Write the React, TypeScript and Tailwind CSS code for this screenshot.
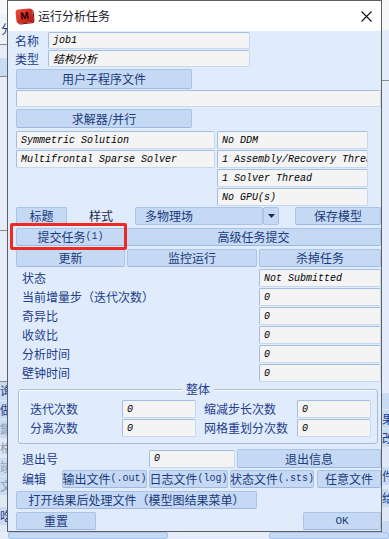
import type { ReactNode } from "react";

const cjk = "font-['Noto_Sans_CJK_SC',sans-serif]";
const monoItalic = "font-['Liberation_Mono',monospace] italic text-[10px]";

function M({ children }: { children: ReactNode }) {
  return <span className="font-['Liberation_Mono',monospace] text-[10px]">{children}</span>;
}

function Btn({
  w,
  h = "h-[18px]",
  className = "",
  children,
}: {
  w: string;
  h?: string;
  className?: string;
  children?: ReactNode;
}) {
  return (
    <button
      type="button"
      className={`flex ${w} ${h} shrink-0 items-center justify-center whitespace-nowrap rounded-[2px] border border-[#aac4e7] border-b-[#9db9df] bg-[#c5d9f4] text-[12px] leading-none text-[#1b3a7a] ${className}`}
    >
      {children}
    </button>
  );
}

function Field({
  w,
  h = "h-[18px]",
  className = "",
  children,
}: {
  w: string;
  h?: string;
  className?: string;
  children?: ReactNode;
}) {
  return (
    <div
      className={`flex ${w} ${h} shrink-0 items-center overflow-hidden whitespace-nowrap rounded-[2px] border border-[#c6d7ee] border-l-[#a3bee3] border-t-[#a3bee3] bg-[#f4f4f4] pl-[4px] text-black ${monoItalic} ${className}`}
    >
      {children}
    </div>
  );
}

function Label({ className = "", children }: { className?: string; children: ReactNode }) {
  return <span className={`shrink-0 text-[12px] leading-none text-[#1f3d8c] ${className}`}>{children}</span>;
}

function StatusRow({ label, value, first }: { label: string; value: string; first?: boolean }) {
  return (
    <div className={`flex h-[18px] items-center ${first ? "mt-[2px]" : "mt-[1px]"}`}>
      <Label className="ml-[14px]">{label}</Label>
      <Field w="w-[122px]" className="ml-auto">
        {value}
      </Field>
    </div>
  );
}

function Background() {
  return (
    <div className="absolute inset-0 flex justify-between">
      <div className="flex w-[7px] flex-col overflow-hidden text-[12px] text-[#1f3d8c]">
        <div className="h-[14px] bg-[#f7f7f7]" />
        <div className="flex h-[30px] items-center bg-[#eef2f8] pl-[1px]">分</div>
        <div className="h-px bg-[#8c8c8c]" />
        <div className="h-[13px] bg-[#e4edf9]" />
        <div className="h-[18px] bg-[#c8dbf3]" />
        <div className="h-px bg-[#8c8c8c]" />
        <div className="h-[153px] bg-[#e4edf9]" />
        <div className="h-px bg-[#8c8c8c]" />
        <div className="h-[150px] bg-[#e4edf9]" />
        <div className="h-px bg-[#8c8c8c]" />
        <div className="flex h-[18px] items-center bg-[#c8dbf3]">询</div>
        <div className="mt-px flex h-[18px] items-center bg-[#c8dbf3]">做</div>
        <div className="mt-px flex h-[18px] items-center bg-[#c8dbf3] text-[#8a9ab5]">鎖</div>
        <div className="mt-px flex h-[18px] items-center bg-[#dfe8f5] text-[#8a9ab5]">格</div>
        <div className="mt-px flex h-[18px] items-center bg-[#c8dbf3] text-[#8a9ab5]">竣</div>
        <div className="mt-px flex h-[18px] items-center bg-[#c8dbf3] text-[#8a9ab5]">文</div>
        <div className="h-[12px]" />
        <div className="flex h-[18px] items-center bg-[#c8dbf3]">吃</div>
      </div>
      <div className="flex w-[7px] flex-col overflow-hidden text-[12px] text-[#1f3d8c]">
        <div className="h-[30px] bg-[#f7f7f7]" />
        <div className="h-[50px] bg-[#e4edf9]" />
        <div className="h-px bg-[#8c8c8c]" />
        <div className="h-[312px] bg-[#e4edf9]" />
        <div className="h-[16px] bg-[#c8dbf3]" />
        <div className="mt-px flex h-[18px] items-center bg-[#c8dbf3]">果</div>
        <div className="mt-px flex h-[18px] items-center bg-[#c8dbf3]">改</div>
        <div className="h-[20px]" />
        <div className="flex h-[18px] items-center bg-[#c8dbf3]">件</div>
        <div className="mt-[4px] flex h-[18px] items-center bg-[#c8dbf3]">给</div>
        <div className="h-[14px]" />
        <div className="flex h-[18px] items-center bg-[#c8dbf3]" />
      </div>
    </div>
  );
}

export default function App() {
  return (
    <div className={`relative h-[539px] w-[389px] overflow-hidden bg-[#dfe9f6] ${cjk}`}>
      <Background />
      <div className="absolute bottom-0 left-0 right-0 flex h-[7px] gap-[2px] bg-[#e4edf9] pl-[8px]">
        <div className="h-full w-[160px] rounded-[2px] border border-[#aac4e7] bg-[#c5d9f4]" />
        <div className="ml-auto h-full w-[120px] rounded-[2px] border border-[#aac4e7] bg-[#c5d9f4]" />
      </div>

      <div className="absolute left-[7px] top-0 flex h-[532px] w-[375px] flex-col border border-[#5f5f5f] bg-[#e0ecfb]">
        {/* title bar */}
        <div className="flex h-[30px] shrink-0 items-center bg-white">
          <div className="ml-[8px] flex h-[14px] w-[17px] -rotate-6 items-center justify-center rounded-[3px] bg-gradient-to-br from-[#f04a3c] to-[#b3120e] shadow-[1px_1px_0_#7a0b08]">
            <span className="font-['Liberation_Sans',sans-serif] text-[10px] font-bold leading-none text-[#1a0000]">M</span>
          </div>
          <span className="ml-[5px] text-[12px] leading-none text-[#1a1a2a]">运行分析任务</span>
          <svg className="ml-auto mr-[9px]" width="11" height="11" viewBox="0 0 11 11">
            <path d="M0.5 0.5 L10.5 10.5 M10.5 0.5 L0.5 10.5" stroke="#111" strokeWidth="1.1" fill="none" />
          </svg>
        </div>

        {/* body */}
        <div className="relative flex flex-1 flex-col">
          <div className="mt-[1px] flex h-[17px] items-center">
            <Label className="ml-[7px] w-[33px]">名称</Label>
            <Field w="w-[202px]" h="h-[17px]">
              job1
            </Field>
          </div>
          <div className="mt-[1px] flex h-[17px] items-center">
            <Label className="ml-[7px] w-[33px]">类型</Label>
            <Field w="w-[202px]" h="h-[17px]" className={`${cjk} text-[11px]`}>
              结构分析
            </Field>
          </div>
          <div className="mt-[2px] flex">
            <Btn w="w-[176px] ml-[8px]" h="h-[20px]">
              用户子程序文件
            </Btn>
          </div>
          <div className="mt-[1px] flex">
            <Field w="w-[365px] ml-[8px]" h="h-[17px]" />
          </div>
          <div className="mt-[2px] flex">
            <Btn w="w-[176px] ml-[8px]" h="h-[19px]">
              求解器/并行
            </Btn>
          </div>

          <div className="mt-[3px] flex h-[18px]">
            <Field w="w-[199px] ml-[8px]">Symmetric Solution</Field>
            <Field w="w-[151px] ml-[2px]">No DDM</Field>
          </div>
          <div className="mt-[1px] flex h-[18px]">
            <Field w="w-[199px] ml-[8px]">Multifrontal Sparse Solver</Field>
            <Field w="w-[151px] ml-[2px]">1 Assembly/Recovery Threads</Field>
          </div>
          <div className="mt-[1px] flex h-[18px]">
            <Field w="w-[151px] ml-[209px]">1 Solver Thread</Field>
          </div>
          <div className="mt-[1px] flex h-[18px]">
            <Field w="w-[151px] ml-[209px]">No GPU(s)</Field>
          </div>

          {/* tabs row */}
          <div className="mt-[1px] flex h-[18px] items-center">
            <Btn w="w-[51px] ml-[8px]">标题</Btn>
            <span className="flex w-[68px] shrink-0 justify-center text-[12px] leading-none text-[#1a2a4a]">样式</span>
            <div className="flex h-[18px] w-[128px] shrink-0 items-center rounded-[2px] border border-[#aac4e7] bg-[#c5d9f4] pl-[9px] text-[12px] leading-none text-[#1b3a7a]">
              多物理场
            </div>
            <div className="flex h-[18px] w-[16px] shrink-0 items-center justify-center rounded-[2px] border border-[#aac4e7] bg-[#c5d9f4]">
              <svg width="7" height="4" viewBox="0 0 7 4">
                <path d="M0 0 H7 L3.5 4 Z" fill="#1b2a50" />
              </svg>
            </div>
            <Btn w="w-[86px] ml-[16px]">保存模型</Btn>
          </div>

          <div className="mt-[3px] flex h-[18px]">
            <Btn w="w-[109px] ml-[8px]">
              提交任务<M>(1)</M>
            </Btn>
            <Btn w="w-[255px] ml-[1px]">高级任务提交</Btn>
          </div>
          <div className="mt-[3px] flex h-[18px]">
            <Btn w="w-[109px] ml-[8px]">更新</Btn>
            <Btn w="w-[130px] ml-[2px]">监控运行</Btn>
            <Btn w="w-[122px] ml-[2px]">杀掉任务</Btn>
          </div>

          <StatusRow label="状态" value="Not Submitted" first />
          <StatusRow label="当前增量步（迭代次数）" value="0" />
          <StatusRow label="奇异比" value="0" />
          <StatusRow label="收敛比" value="0" />
          <StatusRow label="分析时间" value="0" />
          <StatusRow label="壁钟时间" value="0" />

          {/* group 整体 */}
          <div className="relative ml-[10px] mt-[7px] flex h-[55px] w-[360px] flex-col rounded-[3px] border border-[#a9bbd3] pt-[10px] shadow-[inset_1px_1px_0_#ffffff]">
            <span className="absolute left-1/2 top-[-8px] -translate-x-1/2 bg-[#e0ecfb] px-[4px] text-[12px] leading-[14px] text-[#1f3d8c]">
              整体
            </span>
            <div className="flex h-[18px] items-center">
              <Label className="ml-[11px] w-[92px]">迭代次数</Label>
              <Field w="w-[74px]">0</Field>
              <Label className="ml-[8px] w-[93px]">缩减步长次数</Label>
              <Field w="w-[74px]">0</Field>
            </div>
            <div className="mt-[1px] flex h-[18px] items-center">
              <Label className="ml-[11px] w-[92px]">分离次数</Label>
              <Field w="w-[74px]">0</Field>
              <Label className="ml-[8px] w-[93px]">网格重划分次数</Label>
              <Field w="w-[74px]">0</Field>
            </div>
          </div>

          <div className="mt-[5px] flex h-[19px] items-center">
            <Label className="ml-[14px] w-[127px]">退出号</Label>
            <Field w="w-[86px]">0</Field>
            <Btn w="w-[144px] ml-[2px]" h="h-[19px]">
              退出信息
            </Btn>
          </div>
          <div className="mt-[2px] flex h-[18px] items-center">
            <Label className="ml-[14px] w-[40px]">编辑</Label>
            <Btn w="w-[85px]">
              输出文件<M>(.out)</M>
            </Btn>
            <Btn w="w-[79px] ml-[2px]">
              日志文件<M>(log)</M>
            </Btn>
            <Btn w="w-[84px] ml-[2px]">
              状态文件<M>(.sts)</M>
            </Btn>
            <Btn w="w-[64px] ml-[3px]">任意文件</Btn>
          </div>
          <div className="mt-[3px] flex h-[18px]">
            <Btn w="w-[241px] ml-[8px]">打开结果后处理文件（模型图结果菜单）</Btn>
          </div>
          <div className="mt-[3px] flex h-[18px]">
            <Btn w="w-[80px] ml-[8px]">重置</Btn>
            <Btn w="w-[78px] ml-auto">
              <span className="font-['Liberation_Mono',monospace] text-[11px]">OK</span>
            </Btn>
          </div>

          {/* annotation */}
          <div className="pointer-events-none absolute left-[2px] top-[192px] h-[27px] w-[117px] rounded-[2px] border-[3px] border-[#ec2a22]" />
        </div>
      </div>
    </div>
  );
}
